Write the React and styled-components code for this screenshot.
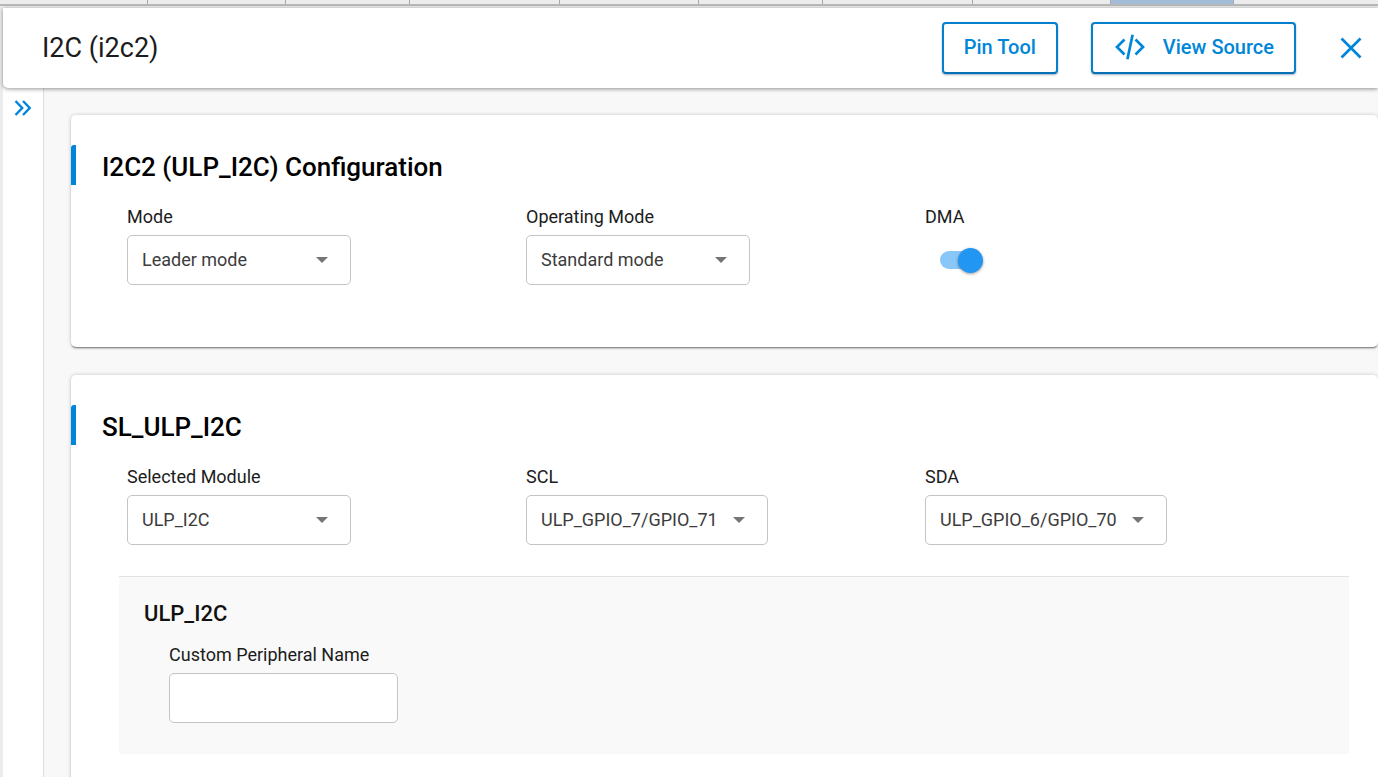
import React from "react";
import styled, { createGlobalStyle } from "styled-components";

const BLUE = "#0086d9";

const GlobalStyle = createGlobalStyle`
  *, *::before, *::after { box-sizing: border-box; }
  html, body, #root { height: 100%; }
  body {
    margin: 0;
    overflow: hidden;
    background: #ececec;
    color: #1c1c1c;
    font-family: Roboto, "Liberation Sans", sans-serif;
  }
`;

const Window = styled.div`
  display: flex;
  flex-direction: column;
  height: 100%;
`;

const TabStrip = styled.div`
  display: flex;
  flex: none;
  height: 6px;
  margin-bottom: 2px;
  border-bottom: 2px solid #b8b8b8;
`;

const Tab = styled.div`
  flex: 0 1 ${(p) => p.$width}px;
  border-right: 1px solid #a9a9a9;
  background: ${(p) => (p.$selected ? "#a3bdd9" : "#ececec")};
`;

const Editor = styled.div`
  display: flex;
  flex: 1;
  flex-direction: column;
  min-height: 0;
  margin-left: 3px;
  background: #f8f8f8;
`;

const Header = styled.header`
  display: flex;
  flex: none;
  align-items: center;
  height: 80px;
  padding: 0 16px 0 39px;
  border-radius: 0 0 0 5px;
  background: #fff;
  box-shadow: 0 1px 4px rgba(0, 0, 0, 0.42);
  z-index: 1;
`;

const PageTitle = styled.h1`
  flex: 1;
  margin: 0;
  font-size: 27px;
  font-weight: 400;
  line-height: 32px;
`;

const Actions = styled.div`
  display: flex;
  gap: 33px;
  margin-right: 44px;
`;

const OutlineButton = styled.button`
  display: flex;
  align-items: center;
  justify-content: center;
  gap: 18px;
  height: 52px;
  padding: 0 20px 2px;
  border: 2px solid #067fcd;
  border-bottom-color: #0570b5;
  border-radius: 4px;
  background: #fff;
  box-shadow: 0 1px 2px rgba(0, 60, 110, 0.4);
  color: ${BLUE};
  font: 500 20px/24px Roboto, "Liberation Sans", sans-serif;
`;

const IconButton = styled.button`
  display: flex;
  padding: 0;
  border: 0;
  background: none;
  color: ${BLUE};
`;

const Body = styled.div`
  display: flex;
  flex: 1;
  min-height: 0;
`;

const Rail = styled.nav`
  display: flex;
  flex: none;
  flex-direction: column;
  align-items: center;
  width: 41px;
  padding-top: 12px;
  border-right: 1px solid #dedede;
  background: #fff;
`;

const Main = styled.main`
  display: flex;
  flex: 1;
  flex-direction: column;
  gap: 28px;
  min-width: 0;
  padding: 27px 0 0 27px;
`;

const Card = styled.section`
  flex: none;
  padding: 30px 0 ${(p) => p.$bottom}px;
  border-radius: 5px;
  background: #fff;
  box-shadow: 0 2px 2px -1px rgba(0, 0, 0, 0.5), 0 0 4px rgba(0, 0, 0, 0.2);
`;

const CardTitle = styled.h2`
  margin: 0;
  padding-left: 26px;
  border-left: 5px solid ${BLUE};
  border-top-left-radius: 3px;
  color: #000;
  font-size: 26px;
  font-weight: 500;
  line-height: 44px;
  height: 40px;
`;

const Fields = styled.div`
  display: grid;
  grid-template-columns: repeat(3, 1fr);
  padding: 20px 54px 0 56px;
`;

const FieldBox = styled.div`
  display: flex;
  flex-direction: column;
  align-items: flex-start;
  gap: 6px;
`;

const Label = styled.label`
  font-size: 18px;
  line-height: 24px;
`;

const SelectWrap = styled.span`
  display: grid;
  align-items: center;
  min-width: 224px;

  > * { grid-area: 1 / 1; }
  > svg { justify-self: end; margin-right: 23px; pointer-events: none; }
`;

const Select = styled.select`
  appearance: none;
  width: 100%;
  height: 50px;
  padding: 0 49px 0 14px;
  border: 1px solid #c4c4c4;
  border-radius: 5px;
  background: #fff;
  color: #3c3c3c;
  font: 400 18px/24px Roboto, "Liberation Sans", sans-serif;
`;

const Switch = styled.input`
  appearance: none;
  display: flex;
  align-items: center;
  justify-content: flex-end;
  width: 43px;
  height: 18px;
  margin: 16px 15px;
  border-radius: 9px;
  background: linear-gradient(90deg, #8ac7f9 36px, transparent 36px);

  &::before {
    content: "";
    width: 25px;
    height: 25px;
    flex: none;
    border-radius: 50%;
    background: #2196f3;
    box-shadow: 0 1px 3px rgba(0, 0, 0, 0.4);
  }
`;

const SubPanel = styled.section`
  margin: 31px 29px 0 48px;
  padding: 24px 25px 31px;
  border-top: 1px solid #e2e2e2;
  background: #f9f9f9;
`;

const SubTitle = styled.h3`
  margin: 0 0 16px;
  color: #111;
  font-size: 22px;
  font-weight: 500;
  line-height: 26px;
`;

const SubField = styled(FieldBox)`
  padding-left: 25px;
`;

const TextInput = styled.input`
  width: 229px;
  height: 50px;
  padding: 0 15px;
  border: 1px solid #c4c4c4;
  border-radius: 5px;
  background: #fff;
  font: 400 18px/24px Roboto, "Liberation Sans", sans-serif;
`;

const Caret = () => (
  <svg width="12" height="6" viewBox="0 0 12 6" aria-hidden="true">
    <path d="M0 0h12L6 6z" fill="#757575" />
  </svg>
);

const CodeIcon = () => (
  <svg width="32" height="26" viewBox="-2 0 32 26" fill="none" stroke="currentColor" strokeWidth="2.7" aria-hidden="true">
    <path d="M9.5 5.5 2 13l7.500 7.500M20.500 5.500 28 13l-7.500 7.500M17.600.8l-5.200 24.400" />
  </svg>
);

const CloseIcon = () => (
  <svg width="22" height="22" viewBox="0 0 22 22" fill="none" stroke="currentColor" strokeWidth="2.7" aria-hidden="true">
    <path d="M1.5 1.5l19 19M20.5 1.5l-19 19" />
  </svg>
);

const ExpandIcon = () => (
  <svg width="18" height="16" viewBox="0 0 18 16" fill="none" stroke="currentColor" strokeWidth="2.4" aria-hidden="true">
    <path d="M1.5 1 8.2 8l-6.700 7M9 1l6.700 7L9 15" />
  </svg>
);

function SelectField({ id, label, options }) {
  return (
    <FieldBox>
      <Label htmlFor={id}>{label}</Label>
      <SelectWrap>
        <Select id={id} defaultValue={options[0]}>
          {options.map((o) => (
            <option key={o}>{o}</option>
          ))}
        </Select>
        <Caret />
      </SelectWrap>
    </FieldBox>
  );
}

const TABS = [148, 138, 124, 150, 139, 124, 150, 138, 123];

export default function App() {
  return (
    <Window>
      <GlobalStyle />
      <TabStrip>
        {TABS.map((w, i) => (
          <Tab key={i} $width={w} $selected={i === TABS.length - 1} />
        ))}
      </TabStrip>
      <Editor>
        <Header>
          <PageTitle>I2C (i2c2)</PageTitle>
          <Actions>
            <OutlineButton type="button">Pin Tool</OutlineButton>
            <OutlineButton type="button">
              <CodeIcon />
              View Source
            </OutlineButton>
          </Actions>
          <IconButton type="button" aria-label="Close">
            <CloseIcon />
          </IconButton>
        </Header>
        <Body>
          <Rail>
            <IconButton type="button" aria-label="Expand">
              <ExpandIcon />
            </IconButton>
          </Rail>
          <Main>
            <Card $bottom={62}>
              <CardTitle>I2C2 (ULP_I2C) Configuration</CardTitle>
              <Fields>
                <SelectField id="mode" label="Mode" options={["Leader mode"]} />
                <SelectField id="operating-mode" label="Operating Mode" options={["Standard mode"]} />
                <FieldBox>
                  <Label htmlFor="dma">DMA</Label>
                  <Switch id="dma" type="checkbox" role="switch" defaultChecked />
                </FieldBox>
              </Fields>
            </Card>
            <Card $bottom={60}>
              <CardTitle>SL_ULP_I2C</CardTitle>
              <Fields>
                <SelectField id="module" label="Selected Module" options={["ULP_I2C"]} />
                <SelectField id="scl" label="SCL" options={["ULP_GPIO_7/GPIO_71"]} />
                <SelectField id="sda" label="SDA" options={["ULP_GPIO_6/GPIO_70"]} />
              </Fields>
              <SubPanel>
                <SubTitle>ULP_I2C</SubTitle>
                <SubField>
                  <Label htmlFor="peripheral-name">Custom Peripheral Name</Label>
                  <TextInput id="peripheral-name" type="text" />
                </SubField>
              </SubPanel>
            </Card>
          </Main>
        </Body>
      </Editor>
    </Window>
  );
}
